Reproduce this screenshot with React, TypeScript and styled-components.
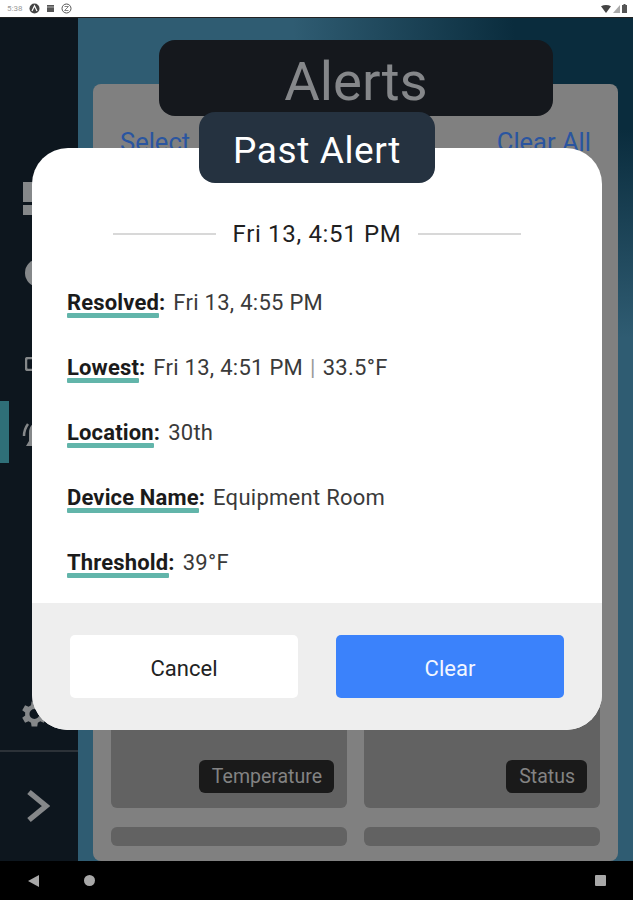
import styled, { createGlobalStyle } from 'styled-components';

const GlobalStyle = createGlobalStyle`
  html, body {
    margin: 0;
    padding: 0;
    background: #000;
  }
  * {
    box-sizing: border-box;
  }
`;

const Screen = styled.div`
  position: relative;
  width: 633px;
  height: 900px;
  overflow: hidden;
  display: flex;
  flex-direction: column;
  font-family: Roboto, "Liberation Sans", sans-serif;
`;

const StatusBar = styled.div`
  height: 18px;
  flex: none;
  background: #fff;
  display: flex;
  align-items: center;
  justify-content: space-between;
  padding: 0 6px 0 7px;
  border-bottom: 1px solid #222;
`;

const StatusGroup = styled.div<{ $tight?: boolean }>`
  display: flex;
  align-items: center;
  gap: ${(p) => (p.$tight ? '2px' : '6px')};
`;

const Clock = styled.span`
  font-size: 8px;
  color: #999;
  margin-right: 1px;
`;

const Main = styled.div`
  flex: 1;
  display: flex;
  min-height: 0;
`;

const Sidebar = styled.div`
  width: 78px;
  flex: none;
  background: #0d161e;
  display: flex;
  flex-direction: column;
`;

const NavList = styled.div`
  flex: 1;
  position: relative;
`;

const ActiveMark = styled.div`
  position: absolute;
  left: 0;
  top: 383px;
  width: 9px;
  height: 62px;
  background: #2f6f78;
`;

const NavIcon = styled.svg<{ $left: number; $top: number }>`
  position: absolute;
  left: ${(p) => p.$left}px;
  top: ${(p) => p.$top}px;
  color: #85888a;
`;

const Expand = styled.div`
  height: 111px;
  border-top: 2px solid #2c3238;
  display: flex;
  align-items: center;
  padding-left: 26px;
  padding-bottom: 2px;
  color: #85888a;
`;

const Content = styled.div`
  flex: 1;
  min-width: 0;
  background:
    radial-gradient(ellipse 340px 320px at 100% 0%, #0a2c3d 35%, rgba(10, 44, 61, 0) 100%),
    #2f5c72;
  padding: 66px 15px 0;
  position: relative;
`;

const TitleBar = styled.div`
  position: absolute;
  left: 81px;
  top: 22px;
  width: 394px;
  height: 76px;
  border-radius: 16px;
  background: #15181d;
  color: #85878a;
  font-size: 54.5px;
  padding-top: 5px;
  display: flex;
  align-items: center;
  justify-content: center;
  z-index: 1;
`;

const Panel = styled.div`
  background: #808080;
  border-radius: 8px;
  height: 100%;
  padding: 0 18px 15px;
  display: flex;
  flex-direction: column;
  justify-content: space-between;
`;

const PanelHead = styled.div`
  display: flex;
  justify-content: space-between;
  padding: 43px 9px 0;
  font-size: 25.5px;
  color: #2a55a0;
  line-height: 30px;
`;

const CardGrid = styled.div`
  display: grid;
  grid-template-columns: 236px 236px;
  column-gap: 17px;
  row-gap: 19px;
`;

const Card = styled.div<{ $short?: boolean }>`
  height: ${(p) => (p.$short ? '19px' : '175px')};
  background: #626262;
  border-radius: 6px;
  display: flex;
  justify-content: flex-end;
  align-items: flex-end;
  padding: 0 13px 15px;
`;

const CardTag = styled.span`
  height: 33px;
  padding: 0 12px 0 13px;
  border-radius: 6px;
  background: #1a1a1a;
  color: #838383;
  font-size: 19.5px;
  display: flex;
  align-items: center;
`;

const NavBar = styled.div`
  height: 39px;
  flex: none;
  background: #000;
  display: flex;
  align-items: center;
  padding: 0 27px 0 28px;
  gap: 45px;
`;

const Square = styled.div`
  width: 11px;
  height: 11px;
  border-radius: 1px;
  background: #a8a8a8;
  margin-left: auto;
`;

const Dialog = styled.div`
  position: absolute;
  left: 32px;
  top: 148px;
  width: 570px;
  height: 582px;
  border-radius: 36px;
  background: #fff;
  overflow: hidden;
  display: flex;
  flex-direction: column;
  z-index: 2;
`;

const DialogTab = styled.div`
  position: absolute;
  left: 199px;
  top: 112px;
  width: 236px;
  height: 71px;
  border-radius: 16px;
  background: #253240;
  color: #fff;
  font-size: 37px;
  padding-top: 5px;
  display: flex;
  align-items: center;
  justify-content: center;
  letter-spacing: 0.6px;
  z-index: 3;
`;

const DialogBody = styled.div`
  flex: 1;
  min-height: 0;
  padding: 0 35px;
`;

const DateHeading = styled.div`
  display: flex;
  align-items: center;
  justify-content: center;
  gap: 17px;
  height: 30px;
  margin-top: 71px;
  margin-bottom: 40px;
  font-size: 24px;
  letter-spacing: 0.67px;
  color: #1f1f1f;

  &::before,
  &::after {
    content: '';
    width: 103px;
    height: 2px;
    background: #d8d8d8;
  }
`;

const InfoRow = styled.div`
  height: 65px;
  display: flex;
  align-items: flex-start;
  font-size: 22px;
  line-height: 28px;
  color: #3a3a3a;
  letter-spacing: 0.27px;
`;

const InfoLabel = styled.span`
  font-weight: 700;
  color: #1b1b1b;
  margin-right: 8px;
  position: relative;
  letter-spacing: 0.15px;

  &::after {
    content: '';
    position: absolute;
    left: 0;
    right: 6px;
    bottom: -1px;
    height: 5px;
    border-radius: 1px;
    background: #62b5aa;
  }
`;

const Divider = styled.span`
  color: #999;
  margin: 0 7px;
`;

const DialogFooter = styled.div`
  height: 127px;
  flex: none;
  background: #eeeeee;
  padding: 32px 38px 0;
  display: flex;
  justify-content: space-between;
`;

const FooterButton = styled.div<{ $primary?: boolean }>`
  width: 228px;
  height: 63px;
  border-radius: 5px;
  background: ${(p) => (p.$primary ? '#3b82fb' : '#fff')};
  color: ${(p) => (p.$primary ? '#f2f6ff' : '#222')};
  font-size: 22px;
  display: flex;
  align-items: center;
  justify-content: center;
  padding-top: 4px;
`;

const rows = [
  { label: 'Resolved:', value: 'Fri 13, 4:55 PM' },
  { label: 'Lowest:', value: 'Fri 13, 4:51 PM', extra: '33.5°F' },
  { label: 'Location:', value: '30th' },
  { label: 'Device Name:', value: 'Equipment Room' },
  { label: 'Threshold:', value: '39°F' },
];

const App = () => {
  return (
    <>
      <GlobalStyle />
      <Screen>
        <StatusBar>
          <StatusGroup>
            <Clock>5:38</Clock>
            <svg width="11" height="11" viewBox="0 0 11 11">
              <circle cx="5.5" cy="5.5" r="5" fill="#444" />
              <path d="M3 8 5.5 2.8 8 8" fill="none" stroke="#fff" strokeWidth="1.2" />
            </svg>
            <svg width="9" height="9" viewBox="0 0 9 9">
              <path d="M1 1h7v7H1z" fill="#555" />
              <path d="M1 3h7" stroke="#ddd" strokeWidth="0.7" />
            </svg>
            <svg width="11" height="11" viewBox="0 0 11 11">
              <circle cx="5.5" cy="5.5" r="4.5" fill="none" stroke="#555" strokeWidth="1" />
              <path d="M3.5 3.5h4l-4 4h4" fill="none" stroke="#777" strokeWidth="0.9" />
            </svg>
          </StatusGroup>
          <StatusGroup $tight>
            <svg width="10" height="8" viewBox="0 0 10 8">
              <path d="M0 1.2C3 -.4 7 -.4 10 1.2L5 8z" fill="#444" />
            </svg>
            <svg width="7" height="8" viewBox="0 0 7 8">
              <path d="M7 0v8H0z" fill="#aaa" />
            </svg>
            <svg width="5" height="9" viewBox="0 0 5 9">
              <path d="M1.5 0h2v1H5v8H0V1h1.5z" fill="#555" />
            </svg>
          </StatusGroup>
        </StatusBar>
        <Main>
          <Sidebar>
            <NavList>
              <ActiveMark />
              <NavIcon $left={22} $top={164} width="28" height="33" viewBox="0 0 28 33">
                <path d="M1 0h12v20H1zM16 0h12v12H16zM1 23h12v10H1zM16 15h12v18H16z" fill="currentColor" />
              </NavIcon>
              <NavIcon $left={25} $top={241} width="28" height="28" viewBox="0 0 28 28">
                <circle cx="14" cy="14" r="14" fill="currentColor" />
              </NavIcon>
              <NavIcon $left={25} $top={339} width="28" height="14" viewBox="0 0 28 14">
                <rect x="1" y="1" width="26" height="12" rx="2" fill="none" stroke="currentColor" strokeWidth="2.5" />
              </NavIcon>
              <NavIcon $left={21} $top={404} width="30" height="28" viewBox="0 0 30 28">
                <path d="M7 2C4 6 3 10 3 14" fill="none" stroke="currentColor" strokeWidth="2.5" />
                <path d="M16 1c-5 0-8 4-8 10v8l-3 5h22l-3-5v-8c0-6-3-10-8-10z" fill="currentColor" />
              </NavIcon>
              <NavIcon $left={16} $top={679} width="34" height="34" viewBox="0 0 24 24">
                <path
                  d="M19.4 13a7.5 7.5 0 0 0 0-2l2.1-1.6-2-3.5-2.5 1a7.5 7.5 0 0 0-1.7-1L15 3.2h-4l-.4 2.7a7.5 7.5 0 0 0-1.7 1l-2.5-1-2 3.5L6.5 11a7.5 7.5 0 0 0 0 2l-2.1 1.6 2 3.5 2.5-1a7.5 7.5 0 0 0 1.7 1l.4 2.7h4l.4-2.7a7.5 7.5 0 0 0 1.7-1l2.5 1 2-3.5zM13 15.5a3.5 3.5 0 1 1 0-7 3.5 3.5 0 0 1 0 7z"
                  fill="currentColor"
                />
              </NavIcon>
            </NavList>
            <Expand>
              <svg width="24" height="34" viewBox="0 0 24 34">
                <path d="M3 3 20 17 3 31" fill="none" stroke="currentColor" strokeWidth="5.5" />
              </svg>
            </Expand>
          </Sidebar>
          <Content>
            <TitleBar>Alerts</TitleBar>
            <Panel>
              <PanelHead>
                <span>Select</span>
                <span>Clear All</span>
              </PanelHead>
              <CardGrid>
                <Card>
                  <CardTag>Temperature</CardTag>
                </Card>
                <Card>
                  <CardTag>Status</CardTag>
                </Card>
                <Card $short />
                <Card $short />
              </CardGrid>
            </Panel>
          </Content>
        </Main>
        <NavBar>
          <svg width="11" height="12" viewBox="0 0 11 12">
            <path d="M11 0v12L0 6z" fill="#a8a8a8" />
          </svg>
          <svg width="11" height="11" viewBox="0 0 11 11">
            <circle cx="5.5" cy="5.5" r="5.5" fill="#a8a8a8" />
          </svg>
          <Square />
        </NavBar>
        <DialogTab>Past Alert</DialogTab>
        <Dialog>
          <DialogBody>
            <DateHeading>Fri 13, 4:51 PM</DateHeading>
            {rows.map((row) => (
              <InfoRow key={row.label}>
                <InfoLabel>{row.label}</InfoLabel>
                {row.value}
                {row.extra && (
                  <>
                    <Divider>|</Divider>
                    {row.extra}
                  </>
                )}
              </InfoRow>
            ))}
          </DialogBody>
          <DialogFooter>
            <FooterButton>Cancel</FooterButton>
            <FooterButton $primary>Clear</FooterButton>
          </DialogFooter>
        </Dialog>
      </Screen>
    </>
  );
};

export default App;
